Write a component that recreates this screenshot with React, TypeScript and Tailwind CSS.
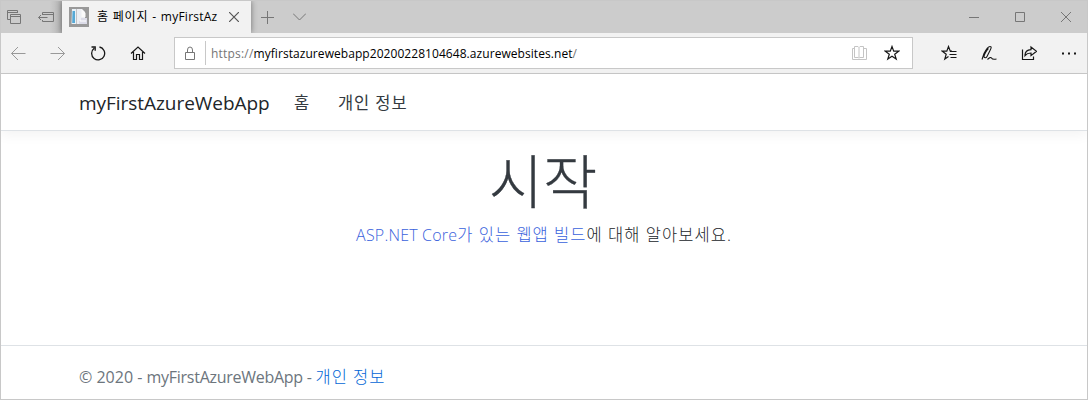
import type { ReactNode } from 'react';

type IconProps = { children: ReactNode; className?: string; w?: number; h?: number };

function Icon({ children, className = '', w = 16, h = 16 }: IconProps) {
  return (
    <svg width={w} height={h} viewBox={`0 0 ${w} ${h}`} fill="none" stroke="currentColor" strokeWidth="1" className={`shrink-0 ${className}`}>
      {children}
    </svg>
  );
}

function TabStrip() {
  return (
    <div className="flex h-[32px] shrink-0 bg-[#cccccc] text-[#767676]">
      <div className="flex w-[61px] shrink-0 items-start bg-linear-to-r from-transparent from-80% to-[#b4b4b4] pt-[9px] pl-[6px]">
        <Icon>
          <path d="M3 9.5H.5v-9h10v2.500M.5 2.500h10M3.500 13.500v-9h10v9zM3.500 6.500h10" />
        </Icon>
        <Icon w={18} className="ml-[14px]">
          <path d="M5.5 5V2.5h11v9h-11V10M5.5 4.5h11M1.500 7.5h9M4 5l-2.500 2.500L4 10" />
        </Icon>
      </div>
      <div className="z-10 flex w-[189px] shrink-0 items-center bg-[#f2f2f2] pl-[7px] shadow-[0_0_6px_rgba(0,0,0,0.45)] [clip-path:inset(0_-8px_0_-8px)]">
        <svg width="20" height="20" viewBox="0 0 20 20" className="shrink-0">
          <rect width="20" height="20" fill="#999999" />
          <path d="M3 2h4v15H2.500z" fill="#e8f1f7" />
          <path d="M3.500 4H6v12H3.200z" fill="#56a9d6" />
          <path d="M7.500 2h5.500l3 3v12H7.500z" fill="#eceef3" />
          <path d="M12.500 2l4 4v4h-4z" fill="#fafafa" />
          <path d="M12 11h6v6h-8v-3h2z" fill="#dcdce8" />
          <path d="M11 14h6" stroke="#ffffff" />
        </svg>
        <span className="ml-[8px] w-[123px] overflow-hidden whitespace-pre text-[12px] leading-[20px] text-black">
          <span className="tracking-[0.8px]">홈 페이지 - </span><span className="tracking-[0.25px]">myFirstAz</span>
        </span>
        <Icon w={10} h={10} className="ml-[9px] text-[#555555]">
          <path d="M0 0l10 10M10 0L0 10" strokeWidth="1.200" />
        </Icon>
      </div>
      <div className="flex flex-1 items-center">
        <Icon w={13} h={13} className="ml-[10px]"><path d="M6.5 0v13M0 6.5h13" /></Icon>
        <Icon w={13} h={8} className="ml-[19px]"><path d="M0 .5l6.5 6.5L13 .5" /></Icon>
        <div className="ml-auto flex items-center">
          <Icon w={10} h={10}><path d="M0 5.5h10" /></Icon>
          <Icon w={10} h={10} className="ml-[36px]"><path d="M.5 .5h9v9h-9z" /></Icon>
          <Icon w={10} h={10} className="mr-[16px] ml-[36px]"><path d="M0 0l10 10M10 0L0 10" /></Icon>
        </div>
      </div>
    </div>
  );
}

function Toolbar() {
  return (
    <div className="flex h-[41px] shrink-0 items-center border-b border-[#c8c8c8] bg-[#f2f2f2] text-[#171717]">
      <div className="flex w-[173px] shrink-0 items-center gap-[24px] pl-[9px]">
        <Icon className="text-[#999999]"><path d="M15.5 8.5H1.500M8 2l-6.500 6.500L8 15" /></Icon>
        <Icon className="text-[#999999]"><path d="M.5 8.5h14M8 2l6.500 6.500L8 15" /></Icon>
        <Icon><path d="M9.500 2A6.5 6.5 0 1 1 4.200 3.200M1.500 2h3.700v3.700" strokeWidth="1.3" /></Icon>
        <Icon><path d="M1 8.500l7-6.500 7 6.500M3.500 7v7.500h3v-5h3v5h3V7" strokeWidth="1.2" /></Icon>
      </div>
      <div className="flex h-[32px] w-[739px] shrink-0 items-center border border-[#c8c8c8] bg-white">
        <Icon w={11} h={15} className="ml-[10px] text-[#767676]"><path d="M.5 6.5h9v7h-9zM2.5 6.5V4a2.5 3 0 0 1 5 0v2.5" /></Icon>
        <div className="ml-[9px] h-[24px] w-px bg-[#c8c8c8]" />
        <span className="ml-[5px] pt-[2px] text-[12px] leading-[20px] whitespace-nowrap text-[#767676]">
          <span className="tracking-[0.2px]">https://</span><span className="tracking-[0.06px] text-black">myfirstazurewebapp20200228104648.azurewebsites.net</span>/
        </span>
        <Icon className="ml-auto text-[#c4c4c4]"><path d="M3.500 1.500H7l1 1 1-1h3.500v11H9l-.5.5h-1l-.5-.5H3.500zM8 2.500V13M3.500 3.500h-2v11h14v-11h-3" /></Icon>
        <Icon className="mr-[12px] ml-[17px]"><path d="M8 1.500l1.700 4.700h5l-4 3 1.500 4.900L8 11.200l-4.200 2.900 1.500-4.900-4-3h5z" strokeWidth="1.2" /></Icon>
      </div>
      <div className="flex flex-1 items-center gap-[24px] pl-[28px]">
        <Icon><path d="M11 6.200H9.300L7.500 1.500 5.800 6.200H1.300l3.900 3-1.400 4.900 3.700-2.600M9 6.500h6.500M8.500 9.500h7M9.500 12.500h6" strokeWidth="1.200" /></Icon>
        <Icon><path d="M1 14.500L3 8.500c2-4 4-7 6-7s1 2 0 4l-3 6c-1 2-3 1.500-3 0s3-7 4.500-8M6.500 14.500c2-2 3.500-2.500 4-1.500s1.500 1.800 5 1" strokeWidth="1.100" /></Icon>
        <Icon><path d="M1.500 4.500v10h11V11.500M4 10.500C4 7.200 6 5 10 4.700V2l5.500 4.300L10 10.600V8c-3 0-4.500.7-6 2.500z" strokeWidth="1.2" /></Icon>
        <Icon><path d="M1 8.500h2M7 8.500h2M13 8.500h2" strokeWidth="2" /></Icon>
      </div>
    </div>
  );
}

export default function App() {
  return (
    <div className="flex h-[400px] w-[1088px] flex-col overflow-hidden border border-[#c8c8c8] bg-white font-['Open_Sans','Noto_Sans_CJK_KR',sans-serif] [font-synthesis:none]">
      <TabStrip />
      <Toolbar />
      <header className="flex h-[57px] shrink-0 items-center border-b border-[#dee2e6] pt-[2px] pl-[78px] whitespace-nowrap shadow-[0_4px_12px_rgba(0,0,0,0.05)]">
        <a className="w-[215px] text-[19px] leading-[30px] tracking-[-0.04px] text-[#212529]">myFirstAzureWebApp</a>
        <a className="w-[44px] text-[16.5px] leading-[24px] text-[#343a40]">홈</a>
        <a className="text-[16.5px] leading-[24px] tracking-[0.9px] text-[#343a40]">개인 정보</a>
      </header>
      <main className="flex flex-1 flex-col items-center">
        <h1 className="mt-[16px] mr-[2px] text-[59px] leading-[68px] font-light text-[#343a40] [-webkit-text-stroke:0.3px_#343a40]">시작</h1>
        <p className="mt-[8px] text-[16.5px] leading-[24px] font-light whitespace-nowrap text-[#212529]">
          <a className="text-[#3a62dc]">
            <span className="text-[16px] tracking-[0.2px]">ASP.NET Core</span><span className="tracking-[1px]">가 있는 웹앱 빌드</span>
          </a>
          <span className="tracking-[1.05px]">에 대해 알아보세요.</span>
        </p>
      </main>
      <footer className="h-[54px] shrink-0 border-t border-[#dee2e6] pt-[19px] pl-[78px] text-[16px] leading-[24px] whitespace-nowrap text-[#6c757d]">
        <span>© 2020 - </span><span className="tracking-[-0.27px]">myFirstAzureWebApp - </span><a className="text-[16.5px] tracking-[0.95px] font-light text-[#0366d6]">개인 정보</a>
      </footer>
    </div>
  );
}
